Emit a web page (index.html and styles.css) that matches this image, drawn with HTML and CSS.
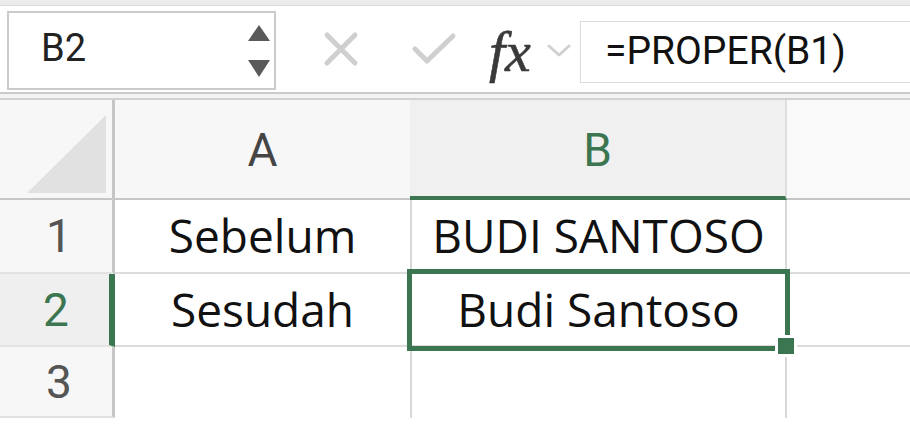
FILE: index.html
```html
<!DOCTYPE html>
<html lang="id">
<head>
<meta charset="utf-8">
<title>PROPER</title>
<link rel="stylesheet" href="styles.css">
</head>
<body>
<div class="app">
  <div class="toolbar">
    <div class="namebox">
      <span class="ref">B2</span>
      <div class="spin">
        <svg width="24" height="56" viewBox="0 0 24 56"><polygon points="12,0 23,16 1,16" fill="#5a5a5a"/><polygon points="1,35 23,35 12,52" fill="#5a5a5a"/></svg>
      </div>
    </div>
    <div class="actions">
      <svg class="ico-x" width="36" height="36" viewBox="0 0 36 36"><path d="M4 4 L32 32 M32 4 L4 32" stroke="#cfcfcf" stroke-width="5" stroke-linecap="round" fill="none"/></svg>
      <svg class="ico-check" width="46" height="36" viewBox="0 0 46 36"><path d="M4 18 L16 30 L42 5" stroke="#cfcfcf" stroke-width="5" stroke-linecap="round" stroke-linejoin="round" fill="none"/></svg>
      <span class="fx">fx</span>
      <svg class="ico-chev" width="24" height="14" viewBox="0 0 24 14"><path d="M2 2 L12 11 L22 2" stroke="#d0d0d0" stroke-width="3" stroke-linecap="round" stroke-linejoin="round" fill="none"/></svg>
    </div>
    <div class="formula">=PROPER(B1)</div>
  </div>
  <div class="sep"></div>
  <div class="grid">
    <div class="corner"><div class="tri"></div></div>
    <div class="colh">A</div>
    <div class="colh sel">B</div>
    <div class="colh last"></div>

    <div class="rowh">1</div>
    <div class="cell">Sebelum</div>
    <div class="cell">BUDI SANTOSO</div>
    <div class="cell last"></div>

    <div class="rowh sel">2</div>
    <div class="cell">Sesudah</div>
    <div class="cell active">Budi Santoso<div class="selbox"></div><div class="handle"></div></div>
    <div class="cell last"></div>

    <div class="rowh">3</div>
    <div class="cell noline"></div>
    <div class="cell noline"></div>
    <div class="cell noline last"></div>
  </div>
</div>
</body>
</html>
```
FILE: styles.css
```css
* { box-sizing: border-box; }
html, body { margin: 0; padding: 0; background: #ffffff; }
body { width: 910px; height: 430px; overflow: hidden; font-family: Roboto, "Liberation Sans", sans-serif; }

.app { width: 910px; }

.toolbar {
  height: 92px;
  border-top: 5px solid #ececec;
  box-shadow: inset 0 1px 0 #dadada;
  display: flex;
  align-items: flex-start;
  background: #ffffff;
}

.namebox {
  margin: 6px 0 0 7px;
  width: 269px;
  height: 79px;
  border: 2px solid #cbcbcb;
  background: #fff;
  display: flex;
  align-items: center;
  justify-content: space-between;
  padding: 0 3px 0 32px;
}
.ref { font-size: 38px; color: #222; line-height: 1; padding-bottom: 6px; }
.spin { display: flex; align-items: center; padding-top: 4px; }

.actions {
  width: 304px;
  height: 86px;
  display: flex;
  align-items: center;
  padding-left: 47px;
}
.ico-x { margin-top: 2px; }
.ico-check { margin-left: 52px; margin-top: 2px; }
.fx {
  font-family: "Liberation Serif", "DejaVu Serif", serif;
  font-style: italic;
  font-size: 58px;
  color: #3a3a3a;
  margin-left: 32px;
  line-height: 1;
  padding-top: 8px;
  -webkit-text-stroke: 0.6px #3a3a3a;
}
.ico-chev { margin-left: 16px; margin-top: 6px; }

.formula {
  margin-top: 16px;
  flex: 1;
  height: 62px;
  border: 1px solid #dcdcdc;
  border-right: none;
  background: #fff;
  font-size: 39px;
  color: #111;
  display: flex;
  align-items: center;
  padding-left: 24px;
  padding-bottom: 2px;
}

.sep {
  height: 8px;
  border-top: 2px solid #cacaca;
  border-bottom: 2px solid #d2d2d2;
  background: #f3f3f3;
}

.grid {
  display: grid;
  grid-template-columns: 115px 297px 375px 1fr;
  grid-template-rows: 100px 74px 73px 71px;
}

.corner {
  background: #f7f7f7;
  border-right: 3px solid #c6c6c6;
  border-bottom: 2px solid #c6c6c6;
  padding: 15px 6px 5px 27px;
}
.tri {
  width: 79px;
  height: 78px;
  background: #e1e1e1;
  clip-path: polygon(100% 0, 100% 100%, 0 100%);
}

.colh {
  background: #f7f7f7;
  border-right: 2px solid #dedede;
  border-bottom: 2px solid #c6c6c6;
  display: flex;
  align-items: center;
  justify-content: center;
  font-size: 46px;
  color: #454545;
  padding-top: 1px;
}
.colh.sel {
  background: #f0f0f0;
  color: #3b7650;
  border-bottom: 4px solid #3b7650;
  margin-left: -2px;
  padding-top: 3px;
}
.colh.last { border-right: none; background: #f9f9f9; }

.rowh {
  background: #f7f7f7;
  border-right: 3px solid #c6c6c6;
  border-bottom: 2px solid #e2e2e2;
  display: flex;
  align-items: center;
  justify-content: center;
  font-size: 46px;
  color: #555;
  padding-left: 6px;
}
.rowh.sel {
  background: #efefef;
  color: #3b7650;
  border-right: 6px solid #3b7650;
  padding-left: 3px;
}

.cell {
  border-right: 2px solid #d8d8d8;
  border-bottom: 2px solid #dcdcdc;
  display: flex;
  align-items: center;
  justify-content: center;
  font-family: "Open Sans", "Liberation Sans", sans-serif;
  font-size: 46px;
  color: #111;
  line-height: 1;
  padding-bottom: 2px;
}
.cell.last { border-right: none; }
.cell.noline { border-bottom: none; }

.cell.active { position: relative; }
.selbox {
  position: absolute;
  left: -5px;
  top: -5px;
  width: 383px;
  height: 82px;
  border: 5px solid #3b7650;
  pointer-events: none;
}
.handle {
  position: absolute;
  left: 363px;
  top: 61px;
  width: 22px;
  height: 22px;
  background: #3b7650;
  border: 3px solid #ffffff;
}
```
